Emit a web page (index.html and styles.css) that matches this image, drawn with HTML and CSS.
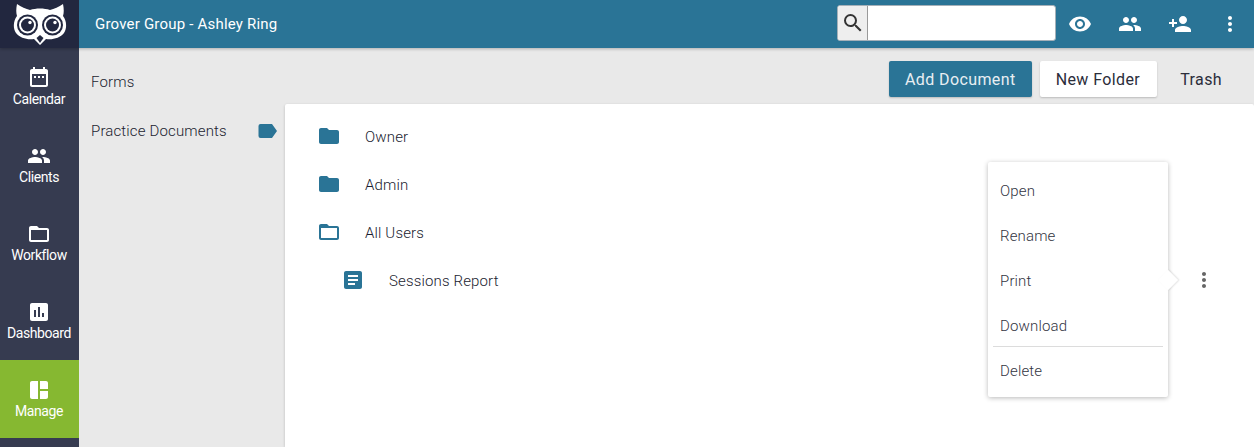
FILE: index.html
```html
<!DOCTYPE html>
<html lang="en">
<head>
<meta charset="utf-8">
<title>Forms</title>
<link rel="stylesheet" href="styles.css">
</head>
<body>
<div class="app">
  <header class="topbar">
    <div class="logo">
      <svg width="56" height="44" viewBox="0 0 56 44">
        <path fill="#fff" d="M5 2 C9 5 14 7 18 8 C24 6 32 6 38 8 C42 7 47 5 51 2 C52 7 52 11 51 14 C55 19 55 27 52 31 C48 36 41 38 34 37 L28 43 L22 37 C15 38 8 36 4 31 C1 27 1 19 5 14 C4 11 4 7 5 2 Z"/>
        <circle cx="15.5" cy="23" r="12" fill="#fff"/><circle cx="40.5" cy="23" r="12" fill="#fff"/>
        <circle cx="15.5" cy="23" r="10.5" fill="#22273f"/><circle cx="15.5" cy="23" r="8.5" fill="#fff"/><circle cx="15.5" cy="23" r="6.5" fill="#22273f"/><circle cx="18" cy="20.5" r="1.7" fill="#fff"/>
        <circle cx="40.5" cy="23" r="10.5" fill="#22273f"/><circle cx="40.5" cy="23" r="8.5" fill="#fff"/><circle cx="40.5" cy="23" r="6.5" fill="#22273f"/><circle cx="43" cy="20.5" r="1.7" fill="#fff"/>
        <path fill="#22273f" d="M24.5 36 L28 33 L31.5 36 L28 41 Z"/>
      </svg>
    </div>
    <div class="title">Grover Group - Ashley Ring</div>
    <div class="search">
      <span class="search-btn"><svg width="24" height="24" viewBox="0 0 24 24"><path fill="#333" d="M15.5 14h-.79l-.28-.27A6.47 6.47 0 0 0 16 9.5 6.5 6.5 0 1 0 9.5 16c1.61 0 3.09-.59 4.23-1.57l.27.28v.79l5 4.99L20.49 19l-4.99-5zm-6 0C7.01 14 5 11.99 5 9.5S7.01 5 9.5 5 14 7.01 14 9.5 11.99 14 9.5 14z"/></svg></span>
      <span class="search-input"></span>
    </div>
    <div class="top-icons">
      <svg width="24" height="24" viewBox="0 0 24 24"><path fill="#fff" d="M12 4.5C7 4.5 2.73 7.61 1 12c1.73 4.39 6 7.5 11 7.5s9.27-3.11 11-7.5c-1.73-4.39-6-7.5-11-7.5zM12 17c-2.76 0-5-2.24-5-5s2.24-5 5-5 5 2.24 5 5-2.24 5-5 5zm0-8c-1.66 0-3 1.34-3 3s1.34 3 3 3 3-1.34 3-3-1.34-3-3-3z"/></svg>
      <svg width="24" height="24" viewBox="0 0 24 24"><path fill="#fff" d="M16 11c1.66 0 2.99-1.34 2.99-3S17.66 5 16 5c-1.66 0-3 1.34-3 3s1.34 3 3 3zm-8 0c1.66 0 2.99-1.34 2.99-3S9.66 5 8 5C6.34 5 5 6.34 5 8s1.34 3 3 3zm0 2c-2.33 0-7 1.17-7 3.5V19h14v-2.5c0-2.33-4.67-3.5-7-3.5zm8 0c-.29 0-.62.02-.97.05 1.16.84 1.97 1.97 1.97 3.45V19h6v-2.5c0-2.33-4.67-3.5-7-3.5z"/></svg>
      <svg width="24" height="24" viewBox="0 0 24 24"><path fill="#fff" d="M15 12c2.21 0 4-1.79 4-4s-1.79-4-4-4-4 1.79-4 4 1.79 4 4 4zm-9-2V7H4v3H1v2h3v3h2v-3h3v-2H6zm9 4c-2.67 0-8 1.34-8 4v2h16v-2c0-2.66-5.33-4-8-4z"/></svg>
      <svg width="24" height="24" viewBox="0 0 24 24"><path fill="#fff" d="M12 8c1.1 0 2-.9 2-2s-.9-2-2-2-2 .9-2 2 .9 2 2 2zm0 2c-1.1 0-2 .9-2 2s.9 2 2 2 2-.9 2-2-.9-2-2-2zm0 6c-1.1 0-2 .9-2 2s.9 2 2 2 2-.9 2-2-.9-2-2-2z"/></svg>
    </div>
  </header>
  <div class="below">
    <nav class="sidebar">
      <a class="nav-item"><svg width="24" height="24" viewBox="0 0 24 24"><path fill="#fff" d="M19 3h-1V1h-2v2H8V1H6v2H5c-1.11 0-2 .9-2 2v14c0 1.1.89 2 2 2h14c1.1 0 2-.9 2-2V5c0-1.1-.9-2-2-2zm0 16H5V8h14v11zM7 10h2v2H7v-2zm4 0h2v2h-2v-2zm4 0h2v2h-2v-2z"/></svg><span>Calendar</span></a>
      <a class="nav-item"><svg width="24" height="24" viewBox="0 0 24 24"><path fill="#fff" d="M16 11c1.66 0 2.99-1.34 2.99-3S17.66 5 16 5c-1.66 0-3 1.34-3 3s1.34 3 3 3zm-8 0c1.66 0 2.99-1.34 2.99-3S9.66 5 8 5C6.34 5 5 6.34 5 8s1.34 3 3 3zm0 2c-2.33 0-7 1.17-7 3.5V19h14v-2.5c0-2.33-4.67-3.5-7-3.5zm8 0c-.29 0-.62.02-.97.05 1.16.84 1.97 1.97 1.97 3.45V19h6v-2.5c0-2.33-4.67-3.5-7-3.5z"/></svg><span>Clients</span></a>
      <a class="nav-item"><svg width="24" height="24" viewBox="0 0 24 24"><path fill="#fff" d="M20 6h-8l-2-2H4c-1.1 0-1.99.9-1.99 2L2 18c0 1.1.9 2 2 2h16c1.1 0 2-.9 2-2V8c0-1.1-.9-2-2-2zm0 12H4V8h16v10z"/></svg><span>Workflow</span></a>
      <a class="nav-item"><svg width="24" height="24" viewBox="0 0 24 24"><path fill="#fff" d="M19 3H5c-1.1 0-2 .9-2 2v14c0 1.1.9 2 2 2h14c1.1 0 2-.9 2-2V5c0-1.1-.9-2-2-2zM9 17H7v-7h2v7zm4 0h-2V7h2v10zm4 0h-2v-4h2v4z"/></svg><span>Dashboard</span></a>
      <a class="nav-item active"><svg width="24" height="24" viewBox="0 0 24 24"><path fill="#fff" d="M3 5v14c0 1.1.9 2 2 2h6V3H5c-1.1 0-2 .9-2 2zm16-2h-6v8h8V5c0-1.1-.9-2-2-2zm-6 18h6c1.1 0 2-.9 2-2v-6h-8v8z"/></svg><span>Manage</span></a>
    </nav>
    <main class="content">
      <div class="toolbar">
        <span class="crumb">Forms</span>
        <div class="actions">
          <button class="btn primary">Add Document</button>
          <button class="btn light">New Folder</button>
          <button class="btn plain">Trash</button>
        </div>
      </div>
      <div class="columns">
        <aside class="cats">
          <span>Practice Documents</span>
          <svg class="tag" width="20" height="14" viewBox="0 0 20 14"><path fill="#2a7496" d="M2.5 0H14l5 7-5 7H2.5A2 2 0 0 1 .5 12V2A2 2 0 0 1 2.5 0Z"/></svg>
        </aside>
        <section class="panel">
          <div class="row"><svg width="24" height="24" viewBox="0 0 24 24"><path fill="#2a7496" d="M10 4H4c-1.1 0-1.99.9-1.99 2L2 18c0 1.1.9 2 2 2h16c1.1 0 2-.9 2-2V8c0-1.1-.9-2-2-2h-8l-2-2z"/></svg><span>Owner</span></div>
          <div class="row"><svg width="24" height="24" viewBox="0 0 24 24"><path fill="#2a7496" d="M10 4H4c-1.1 0-1.99.9-1.99 2L2 18c0 1.1.9 2 2 2h16c1.1 0 2-.9 2-2V8c0-1.1-.9-2-2-2h-8l-2-2z"/></svg><span>Admin</span></div>
          <div class="row"><svg width="24" height="24" viewBox="0 0 24 24"><path fill="#2a7496" d="M20 6h-8l-2-2H4c-1.1 0-1.99.9-1.99 2L2 18c0 1.1.9 2 2 2h16c1.1 0 2-.9 2-2V8c0-1.1-.9-2-2-2zm0 12H4V8h16v10z"/></svg><span>All Users</span></div>
          <div class="row file"><svg width="24" height="24" viewBox="0 0 24 24"><path fill="#2a7496" d="M19 3H5c-1.1 0-2 .9-2 2v14c0 1.1.9 2 2 2h14c1.1 0 2-.9 2-2V5c0-1.1-.9-2-2-2zm-5 14H7v-2h7v2zm3-4H7v-2h10v2zm0-4H7V7h10v2z"/></svg><span>Sessions Report</span>
            <svg class="more" width="24" height="24" viewBox="0 0 24 24"><path fill="#666" d="M12 8c1.1 0 2-.9 2-2s-.9-2-2-2-2 .9-2 2 .9 2 2 2zm0 2c-1.1 0-2 .9-2 2s.9 2 2 2 2-.9 2-2-.9-2-2-2zm0 6c-1.1 0-2 .9-2 2s.9 2 2 2 2-.9 2-2-.9-2-2-2z"/></svg>
          </div>
          <div class="menu">
            <div class="menu-item">Open</div>
            <div class="menu-item">Rename</div>
            <div class="menu-item">Print</div>
            <div class="menu-item divided">Download</div>
            <div class="menu-item last">Delete</div>
            <i class="arrow"></i>
          </div>
        </section>
      </div>
    </main>
  </div>
</div>
</body>
</html>
```
FILE: styles.css
```css
* { box-sizing: border-box; }
html, body { margin: 0; height: 100%; overflow: hidden; }
body { font-family: "Roboto", "Liberation Sans", sans-serif; font-weight: 300; font-size: 15px; letter-spacing: .15px; color: #1b1d30; background: #e9e9e9; }
svg { display: block; flex: none; }
.app { display: flex; flex-direction: column; height: 447px; }
.topbar { display: flex; align-items: center; height: 48px; flex: none; background: #2a7496; color: #fff; box-shadow: 0 1px 3px rgba(0,0,0,.25); position: relative; z-index: 2; }
.logo { width: 79px; height: 48px; background: #22273f; display: flex; align-items: center; justify-content: center; }
.title { margin-left: 16px; font-weight: 400; letter-spacing: .2px; flex: 1; }
.search { display: flex; width: 219px; height: 36px; margin-bottom: 2px; border: 1px solid #a5b0b8; border-radius: 3px; background: #fff; overflow: hidden; }
.search-btn { width: 30px; background: #eee; border-right: 1px solid #999; display: flex; align-items: center; justify-content: center; }
.search-input { flex: 1; }
.top-icons { display: flex; gap: 26px; margin-left: 12px; margin-right: 12px; }
.below { display: flex; flex: 1; min-height: 0; }
.sidebar { width: 79px; flex: none; background: #363b50; }
.nav-item { height: 78px; padding: 18px 1px 0 0; display: flex; flex-direction: column; align-items: center; color: #fff; font-size: 14px; font-weight: 400; letter-spacing: -.4px; }
.nav-item span { margin-top: 1px; }
.nav-item.active { background: #86b831; }
.content { flex: 1; min-width: 0; display: flex; flex-direction: column; }
.toolbar { height: 56px; flex: none; display: flex; align-items: center; justify-content: space-between; padding-left: 12px; }
.crumb { margin-top: 11px; }
.actions { display: flex; align-items: center; margin-top: 6px; margin-right: 16px; gap: 8px; }
.btn { height: 36px; border: 0; border-radius: 2px; font: 400 16px "Roboto", sans-serif; padding: 0 16px; letter-spacing: .4px; color: #2b2d3a; background: none; }
.primary { background: #2a7496; color: #e8eef2; box-shadow: 0 1px 2px rgba(0,0,0,.2); }
.light { padding-right: 17px; background: #fff; box-shadow: 0 1px 2px rgba(0,0,0,.2); }
.plain { padding-left: 15px; }
.columns { display: flex; flex: 1; min-height: 0; }
.cats { width: 206px; flex: none; display: flex; justify-content: space-between; align-items: flex-start; padding: 18px 7px 0 12px; }
.tag { margin-top: 2px; }
.panel { flex: 1; background: #fff; border-radius: 2px 2px 0 0; padding: 8px 0 0 32px; position: relative; box-shadow: 0 1px 3px rgba(0,0,0,.2); }
.row { height: 48px; display: flex; align-items: center; gap: 24px; }
.row span { padding-top: 1px; }
.row.file { padding-left: 24px; position: relative; }
.more { position: absolute; left: 875px; top: 12px; }
.menu { position: absolute; left: 703px; top: 58px; width: 180px; height: 235px; padding: 6px 5px; background: #fff; border-radius: 2px; box-shadow: 0 1px 5px rgba(0,0,0,.28); }
.menu-item { height: 45px; padding-left: 7px; display: flex; align-items: center; color: #33353f; }
.divided { height: 44px; padding-top: 2px; border-bottom: 1px solid #dcdcdc; }
.last { height: 46px; padding-top: 1px; }
.arrow { position: absolute; left: 172px; top: 110px; width: 16px; height: 16px; background: #fff; transform: rotate(45deg) scale(.9, .9); box-shadow: 1px -1px 2px rgba(0,0,0,.12); }
```
